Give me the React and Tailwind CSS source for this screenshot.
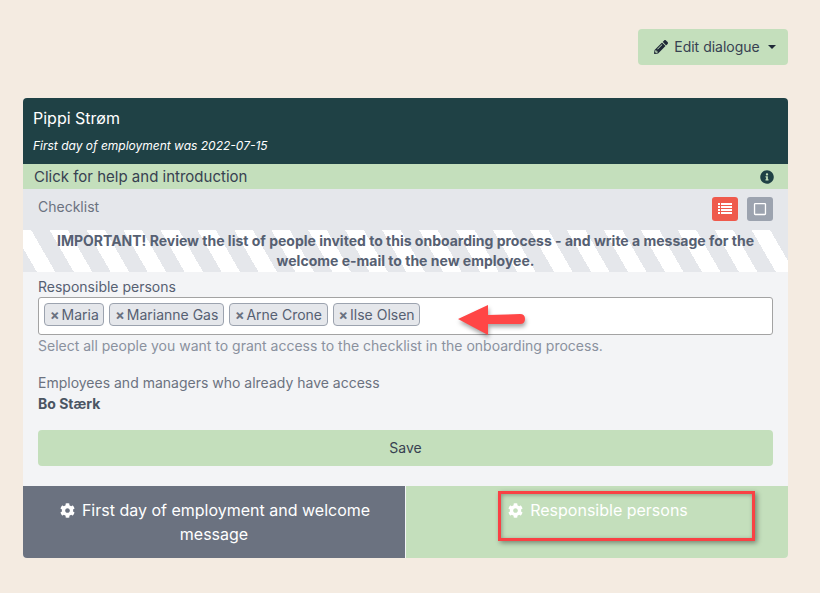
import { FaCog, FaInfoCircle, FaPencilAlt, FaRegSquare } from 'react-icons/fa'

const PEOPLE = ['Maria', 'Marianne Gas', 'Arne Crone', 'Ilse Olsen']

function Tag({ name }) {
  return (
    <span className="flex h-[23px] items-center gap-[2px] rounded-[4px] border border-[#9ca3af] bg-[#e5e7eb] pl-[5px] pr-[4.5px] text-sm leading-none text-[#566072]">
      <span className="text-[14px] font-bold leading-none text-[#6b7280]">×</span>
      {name}
    </span>
  )
}

function ListIcon() {
  return (
    <svg width="14" height="12" viewBox="0 0 14 12" fill="currentColor">
      {[0, 3, 6, 9].map((y) => (
        <g key={y}>
          <rect x="0" y={y} width="2" height="2" />
          <rect x="3" y={y} width="11" height="2" />
        </g>
      ))}
    </svg>
  )
}

export default function App() {
  return (
    <div className="relative h-[593px] w-[820px] overflow-hidden bg-[#f4ebe1] font-['Inter',sans-serif]">
      <div className="flex justify-end pr-[32px] pt-[29px]">
        <button
          type="button"
          className="flex h-[36px] w-[150px] items-center justify-center rounded-[4px] bg-[#c4dfbc] pl-[4px] text-sm text-[#374151]"
        >
          <FaPencilAlt className="mr-[6px] h-[14px] w-[14px] text-[#1f2937]" />
          Edit dialogue
          <span className="ml-[8px] h-0 w-0 border-x-[4px] border-t-[4px] border-x-transparent border-t-[#1f2937]" />
        </button>
      </div>

      <div className="ml-[23px] mt-[33px] w-[765px] overflow-hidden rounded-[4px] bg-[#f3f4f6]">
        <div className="h-[66px] bg-[#1f4145] px-[10px] pt-[10px] text-white">
          <div className="text-base leading-[20px]">Pippi Strøm</div>
          <div className="mt-[10px] text-xs italic leading-[16px]">First day of employment was 2022-07-15</div>
        </div>

        <div className="flex h-[25px] items-center justify-between bg-[#c4dfbc] pl-[11px] pr-[14px] text-[15px] text-[#374151]">
          <span className="pt-[2px]">Click for help and introduction</span>
          <FaInfoCircle className="h-[14px] w-[14px] text-[#1f4145]" />
        </div>

        <div className="flex h-[41px] items-start justify-between bg-[#e5e7eb] pl-[15px] pr-[15px] pt-[8px]">
          <span className="text-sm leading-[20px] text-[#6b7280]">Checklist</span>
          <div className="flex gap-[9px]">
            <span className="flex h-[24px] w-[26px] items-center justify-center rounded-[3px] bg-[#ef5a4c] text-white">
              <ListIcon />
            </span>
            <span className="flex h-[24px] w-[26px] items-center justify-center rounded-[3px] bg-[#9ca3af] text-white">
              <FaRegSquare className="h-[14px] w-[14px]" />
            </span>
          </div>
        </div>

        <div className="flex h-[42px] items-center justify-center bg-[repeating-linear-gradient(60deg,#e5e7eb_0px,#e5e7eb_12px,#ffffff_12px,#ffffff_28px,#e5e7eb_28px,#e5e7eb_32px)] px-[15px] text-center text-sm font-bold leading-[20px] text-[#566072]">
          <span className="w-[720px]">
            IMPORTANT! Review the list of people invited to this onboarding process - and write a message for the welcome e-mail to the new employee.
          </span>
        </div>

        <div className="px-[15px] pt-[5px]">
          <div className="text-sm leading-[20px] text-[#566072]">Responsible persons</div>
          <div className="flex h-[38px] items-center gap-[5px] rounded-[3px] border border-[#a3a3a3] bg-white px-[5px] pb-[3px]">
            {PEOPLE.map((name) => (
              <Tag key={name} name={name} />
            ))}
          </div>
          <div className="mt-[1px] text-sm leading-[20px] text-[#8a919e]">
            Select all people you want to grant access to the checklist in the onboarding process.
          </div>
          <div className="mt-[17px] text-sm leading-[20px] text-[#6b7280]">Employees and managers who already have access</div>
          <div className="mt-px text-sm font-bold leading-[20px] text-[#4b5563]">Bo Stærk</div>
          <button
            type="button"
            className="mt-[16px] h-[36px] w-full rounded-[4px] bg-[#c4dfbc] text-sm text-[#374151]"
          >
            Save
          </button>
        </div>

        <div className="mt-[20px] flex h-[72px]">
          <div className="w-[382px] bg-[#6b7280] px-[20px] pt-[12px] text-center text-base leading-[24px] text-white">
            <FaCog className="ml-[2px] mr-[7px] inline h-[15px] w-[15px] align-[-2px]" />
            First day of employment and welcome message
          </div>
          <div className="ml-px flex-1 bg-[#c4dfbc] pt-[12px] text-center text-base leading-[24px] text-white">
            <FaCog className="ml-[2px] mr-[7px] inline h-[15px] w-[15px] align-[-2px]" />
            Responsible persons
          </div>
        </div>
      </div>

      {/* annotations drawn over the screenshot */}
      <svg
        className="absolute left-[455px] top-[302px] overflow-visible drop-shadow-[1px_3px_2px_rgba(0,0,0,0.35)]"
        width="76"
        height="36"
        viewBox="0 0 76 36"
      >
        <path d="M3 17 L33 3 L33 13 L65 12 Q70 12 70 17 Q70 22 65 22 L33 22 L33 33 Z" fill="#ff4646" />
      </svg>
      <div className="absolute left-[498px] top-[491px] h-[50px] w-[257px] border-[3px] border-[#f94144] shadow-[2px_2px_5px_rgba(0,0,0,0.4),inset_1px_1px_4px_rgba(0,0,0,0.3)]" />
    </div>
  )
}
